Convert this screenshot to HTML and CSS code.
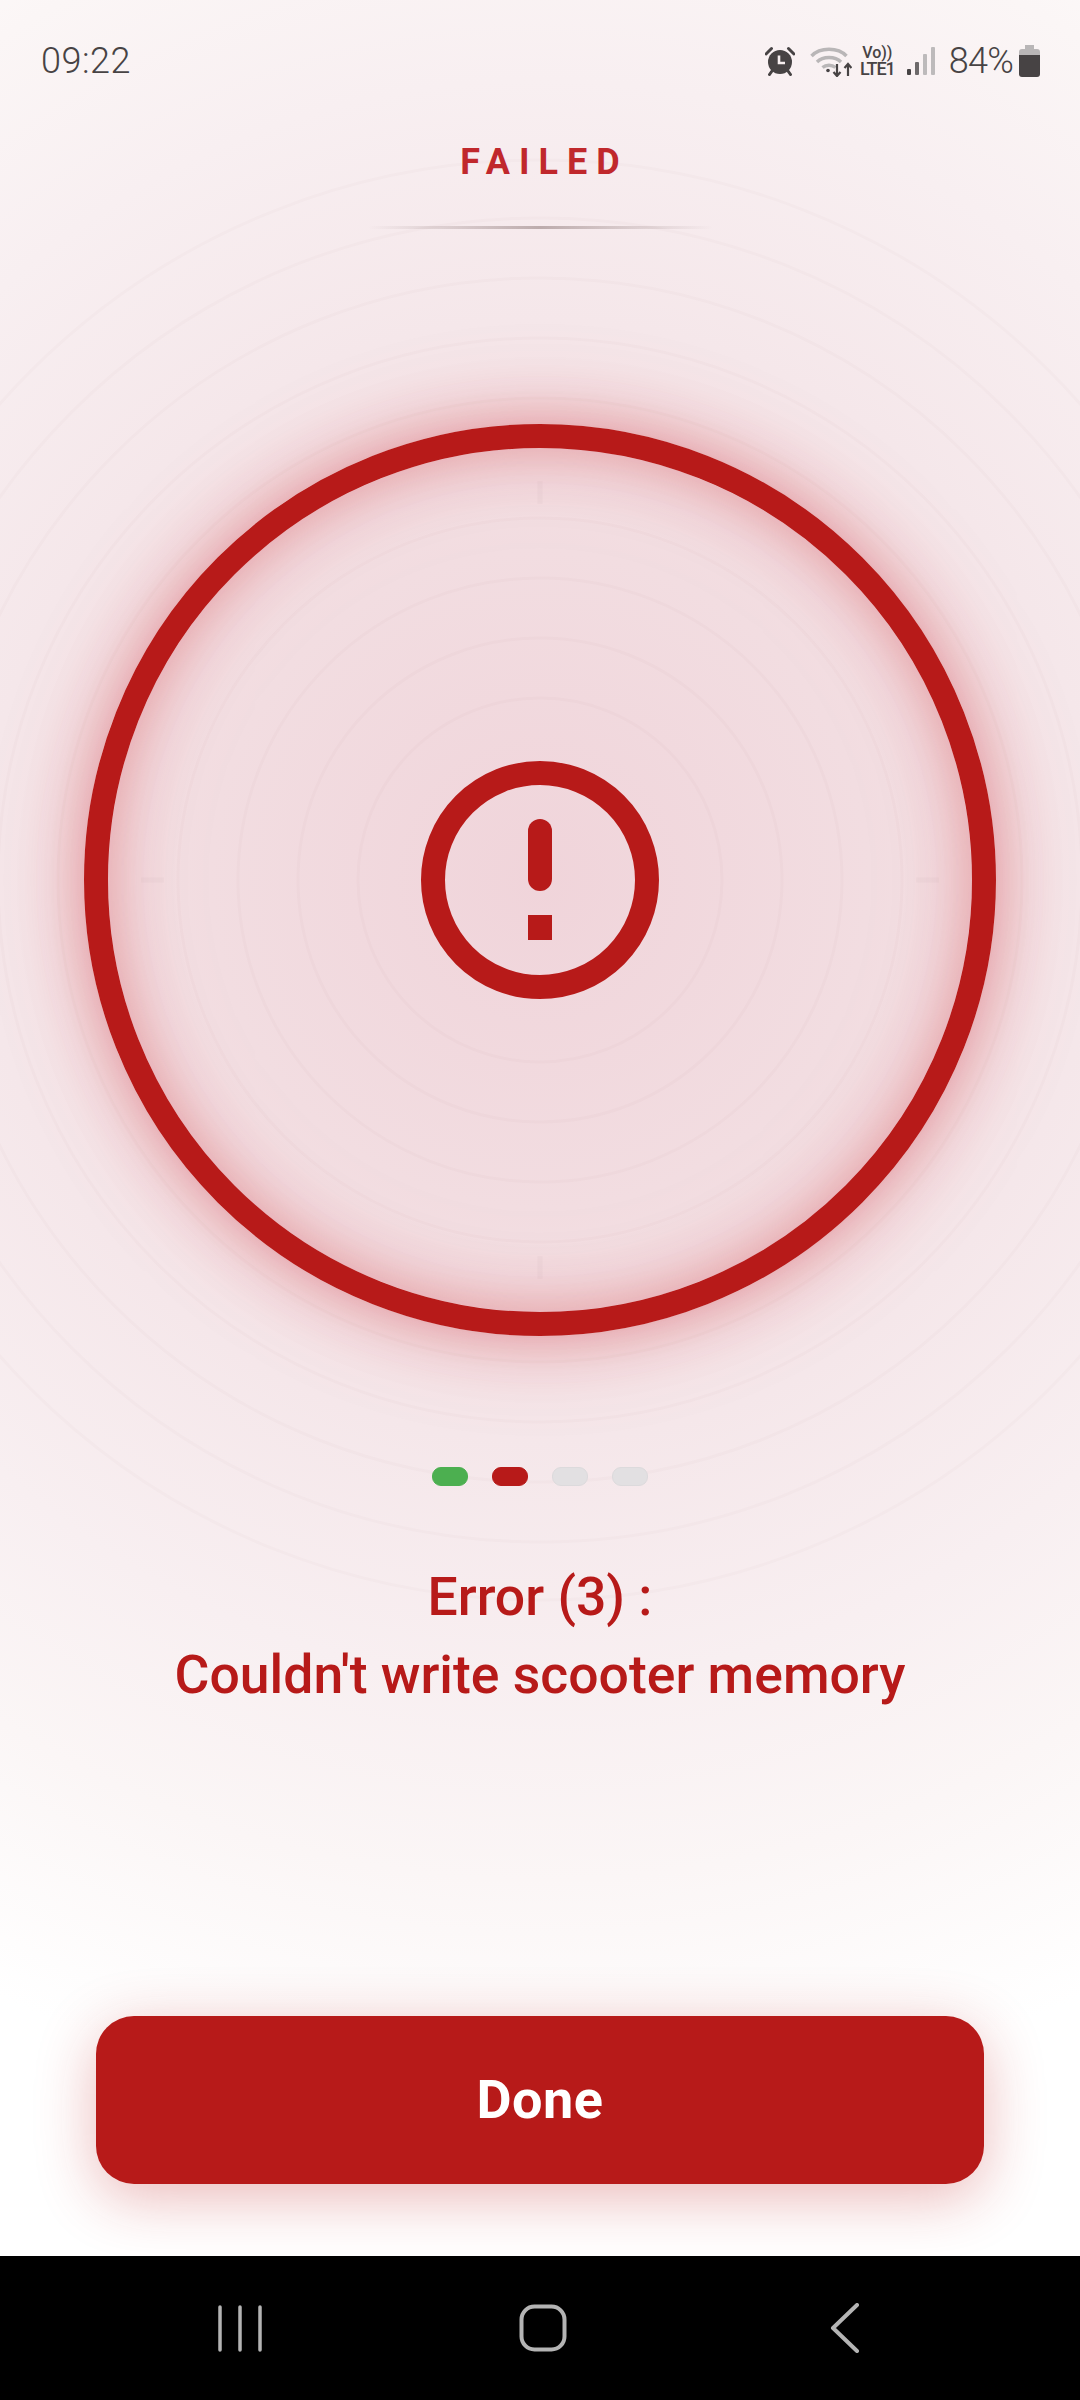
FILE: index.html
```html
<!DOCTYPE html>
<html lang="en">
<head>
    <meta charset="UTF-8">
    <meta name="viewport" content="width=device-width, initial-scale=1.0">
    <title>Failed</title>
    <link rel="stylesheet" href="styles.css">
</head>
<body>
    <div class="screen">
        <!-- concentric rings and tick marks behind the content -->
        <svg class="backdrop" width="1080" height="2256" viewBox="0 0 1080 2256">
            <g class="backdrop-rings" fill="none">
                <circle cx="540" cy="880" r="182"/>
                <circle cx="540" cy="880" r="242"/>
                <circle cx="540" cy="880" r="302"/>
                <circle cx="540" cy="880" r="362"/>
                <circle cx="540" cy="880" r="482"/>
                <circle cx="540" cy="880" r="542"/>
                <circle cx="540" cy="880" r="602"/>
                <circle cx="540" cy="880" r="662"/>
                <circle cx="540" cy="880" r="720"/>
            </g>
            <g class="backdrop-ticks">
                <path d="M540 481V504M540 1256V1279M141 880H164M916 880H939"/>
            </g>
        </svg>

        <header class="status-bar">
            <span class="status-time">09:22</span>
            <div class="status-icons">
                <svg class="icon-alarm" width="30" height="30" viewBox="0 0 30 30">
                    <circle cx="15" cy="16" r="12" fill="#474344"/>
                    <path d="M1 8 6.500 2.500M29 8 23.500 2.500M7 25 4.500 28.500M23 25 25.500 28.500" stroke="#474344" stroke-width="3" stroke-linecap="round" fill="none"/>
                    <path d="M14 9.500V17H20" stroke="#f7eff0" stroke-width="2.600" fill="none"/>
                </svg>
                <svg class="icon-wifi" width="42" height="32" viewBox="0 0 42 32">
                    <g fill="none" stroke="#b9b6b7" stroke-width="3.400">
                        <path d="M1.500 11C10 2 28 2 36.500 11"/>
                        <path d="M7 17C13 11 25 11 31 17"/>
                        <path d="M12.500 22.500C16 19.500 22 19.500 25.500 22.500"/>
                    </g>
                    <circle cx="18" cy="25.500" r="1.800" fill="#474344"/>
                    <path d="M27 19V31M23.500 27 27 31 30.500 27M38 31V19M34.500 23 38 19 41.500 23" stroke="#474344" stroke-width="2.200" fill="none"/>
                </svg>
                <div class="status-volte">
                    <span class="status-vo">Vo))</span>
                    <span class="status-lte">LTE1</span>
                </div>
                <svg class="icon-signal" width="28" height="28" viewBox="0 0 28 28">
                    <rect x="0" y="22" width="4" height="6" rx="1" fill="#474344"/>
                    <rect x="8" y="15" width="4" height="13" rx="1" fill="#6d696a"/>
                    <rect x="16" y="7" width="4" height="21" rx="1" fill="#bdbabb"/>
                    <rect x="24" y="0" width="4" height="28" rx="1" fill="#bdbabb"/>
                </svg>
                <span class="status-level">84%</span>
                <svg class="icon-battery" width="21" height="32" viewBox="0 0 21 32">
                    <path d="M6 0H15V4H18Q21 4 21 7V11H0V7Q0 4 3 4H6Z" fill="#b9b6b7"/>
                    <path d="M0 10H21V29Q21 32 18 32H3Q0 32 0 29Z" fill="#474344"/>
                </svg>
            </div>
        </header>

        <h1 class="title">FAILED</h1>
        <div class="title-rule"></div>

        <div class="gauge">
            <svg class="gauge-icon" width="240" height="240" viewBox="0 0 240 240">
                <circle cx="120" cy="120" r="107" fill="none" stroke="#b71a19" stroke-width="24"/>
                <rect x="108" y="59" width="24" height="72" rx="12" fill="#b71a19"/>
                <rect x="108" y="155" width="24" height="25" fill="#b71a19"/>
            </svg>
        </div>

        <div class="steps">
            <span class="step step-done"></span>
            <span class="step step-failed"></span>
            <span class="step"></span>
            <span class="step"></span>
        </div>

        <p class="message">Error (3) :<br>Couldn't write scooter memory</p>

        <button class="done-button" type="button">Done</button>
    </div>

    <nav class="nav-bar">
        <svg width="44" height="48" viewBox="0 0 44 48">
            <path d="M2 3V46M22 3V46M42 3V46" stroke="#b4b4b4" stroke-width="3.500" stroke-linecap="round" fill="none"/>
        </svg>
        <svg class="nav-home" width="48" height="48" viewBox="0 0 48 48">
            <rect x="2.500" y="2.500" width="43" height="43" rx="13" fill="none" stroke="#b4b4b4" stroke-width="4"/>
        </svg>
        <svg width="30" height="50" viewBox="0 0 30 50">
            <path d="M27 2 3 25 27 48" stroke="#b4b4b4" stroke-width="4" stroke-linecap="round" stroke-linejoin="round" fill="none"/>
        </svg>
    </nav>
</body>
</html>
```

FILE: styles.css
```css
* {
    box-sizing: border-box;
}
body {
    margin: 0;
    width: 1080px;
    height: 2400px;
    overflow: hidden;
    font-family: Roboto, "Liberation Sans", sans-serif;
    background-color: #000000;
}
.screen {
    position: relative;
    display: flex;
    flex-direction: column;
    align-items: center;
    height: 2256px;
    padding-bottom: 72px;
    overflow: hidden;
    background: radial-gradient(circle at 540px 880px, #f0d4da 0, #f2dde1 330px, #f5e7ea 560px, #f8eff1 800px, #fbf6f6 1000px, #ffffff 1240px);
}
.backdrop {
    position: absolute;
    top: 0;
    left: 0;
}
.backdrop-rings circle {
    stroke: rgba(120, 90, 95, 0.022);
    stroke-width: 3;
}
.backdrop-ticks path {
    stroke: rgba(120, 90, 95, 0.04);
    stroke-width: 5;
    fill: none;
}

/* status bar */
.status-bar {
    position: relative;
    display: flex;
    justify-content: space-between;
    align-items: center;
    width: 100%;
    height: 122px;
    padding: 0 40px 0 41px;
    color: #474344;
}
.status-time {
    font-size: 36px;
    font-weight: 300;
    letter-spacing: 0.500px;
}
.status-icons {
    display: flex;
    align-items: center;
}
.icon-wifi {
    margin-left: 15px;
}
.status-volte {
    display: flex;
    flex-direction: column;
    align-items: center;
    margin-left: 7px;
    width: 37px;
    line-height: 16px;
}
.status-vo {
    font-size: 16px;
    font-weight: 500;
}
.status-lte {
    font-size: 18px;
    font-weight: 500;
    letter-spacing: -1px;
}
.icon-signal {
    margin-left: 11px;
}
.status-level {
    margin-left: 14px;
    font-size: 36px;
    font-weight: 300;
    line-height: 32px;
    letter-spacing: -0.800px;
}
.icon-battery {
    margin-left: 6px;
}

/* heading */
.title {
    position: relative;
    margin: 19px -9px 0 0;
    font-size: 36px;
    line-height: 42px;
    font-weight: 700;
    letter-spacing: 9px;
    color: #c0282c;
}
.title-rule {
    position: relative;
    width: 345px;
    height: 3px;
    margin-top: 43px;
    background: linear-gradient(90deg, rgba(150, 130, 130, 0), rgba(150, 130, 130, 0.6) 50%, rgba(150, 130, 130, 0));
}

/* result ring */
.gauge {
    position: relative;
    display: flex;
    flex-shrink: 0;
    justify-content: center;
    align-items: center;
    width: 912px;
    height: 912px;
    margin-top: 195px;
    border: 24px solid #b71a19;
    border-radius: 50%;
    box-shadow: 0 0 60px rgba(205, 40, 50, 0.42), 0 0 120px rgba(205, 40, 50, 0.1), inset 0 0 60px rgba(205, 40, 50, 0.38), inset 0 0 120px rgba(205, 40, 50, 0.08);
}

/* progress pills */
.steps {
    position: relative;
    display: flex;
    gap: 24px;
    margin-top: 131px;
}
.step {
    width: 36px;
    height: 19px;
    border-radius: 9px;
    background-color: #e2e0e2;
    border: 1px solid #dcdadc;
}
.step-done {
    background-color: #4caf50;
    border-color: #4caf50;
}
.step-failed {
    background-color: #b71a19;
    border-color: #b71a19;
}

.message {
    position: relative;
    margin: 72px 0 0;
    font-size: 53.500px;
    line-height: 78px;
    font-weight: 500;
    text-align: center;
    color: #b71a19;
}

.done-button {
    position: relative;
    width: 888px;
    height: 168px;
    margin-top: auto;
    padding-bottom: 3px;
    border: none;
    border-radius: 38px;
    background-color: #b71a19;
    color: #ffffff;
    font-family: inherit;
    font-size: 54px;
    font-weight: 700;
    letter-spacing: 0.500px;
    box-shadow: 0 14px 60px rgba(190, 28, 28, 0.3);
}

/* system navigation */
.nav-bar {
    display: flex;
    justify-content: space-between;
    align-items: center;
    height: 144px;
    padding: 0 220px 0 218px;
    background-color: #000000;
}
.nav-home {
    margin-right: 6px;
}
```
